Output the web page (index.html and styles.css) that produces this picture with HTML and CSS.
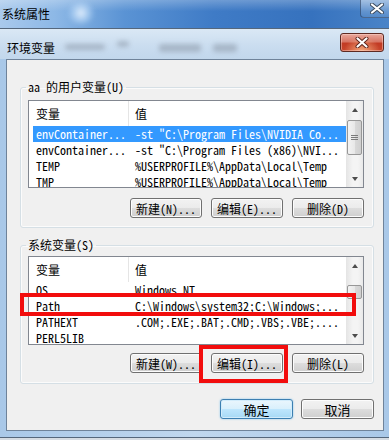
FILE: index.html
```html
<!DOCTYPE html>
<html lang="zh-CN">
<head>
  <meta charset="UTF-8" />
  <meta name="viewport" content="width=device-width, initial-scale=1.0" />
  <title>环境变量</title>
  <link rel="stylesheet" href="styles.css">
</head>
<body>
  <div class="screen">
    <div class="outer-bar">
      <span class="outer-title">系统属性</span>
      <span class="outer-glow"></span>
      <span class="outer-close">
        <svg width="14" height="11" viewBox="0 0 14 11"><path d="M2 1.5 L12 9.5 M12 1.5 L2 9.5" stroke="#3a4a5e" stroke-width="4" stroke-linecap="round"/><path d="M2 1.5 L12 9.5 M12 1.5 L2 9.5" stroke="#fff" stroke-width="2.2" stroke-linecap="round"/></svg>
      </span>
    </div>

    <div class="dialog">
      <div class="dialog-bar">
        <span class="dialog-title">环境变量</span>
        <span class="smudge s1"></span>
        <span class="smudge s2"></span>
        <span class="smudge s3"></span>
        <span class="smudge s4"></span>
        <span class="close-btn">
          <svg width="14" height="11" viewBox="0 0 14 11"><path d="M2.5 1.5 L11.5 9.5 M11.5 1.5 L2.5 9.5" stroke="#5b231a" stroke-width="4" stroke-linecap="round"/><path d="M2.5 1.5 L11.5 9.5 M11.5 1.5 L2.5 9.5" stroke="#fff" stroke-width="2.2" stroke-linecap="round"/></svg>
        </span>
      </div>

      <div class="client">
        <fieldset class="group group-user">
          <legend>aa 的用户变量(U)</legend>
          <div class="list list-user">
            <div class="list-body">
              <div class="list-head"><span class="head-name">变量</span><span class="head-value">值</span></div>
              <div class="row selected"><span class="col-name">envContainer...</span><span class="col-value">-st "C:\Program Files\NVIDIA Co...</span></div>
              <div class="row"><span class="col-name">envContainer...</span><span class="col-value">-st "C:\Program Files (x86)\NVI...</span></div>
              <div class="row"><span class="col-name">TEMP</span><span class="col-value">%USERPROFILE%\AppData\Local\Temp</span></div>
              <div class="row"><span class="col-name">TMP</span><span class="col-value">%USERPROFILE%\AppData\Local\Temp</span></div>
            </div>
            <div class="scrollbar">
              <div class="sb-btn sb-up"></div>
              <div class="sb-track"><div class="sb-thumb"></div></div>
              <div class="sb-btn sb-down"></div>
            </div>
          </div>
          <div class="btn-row">
            <span class="btn">新建(N)...</span>
            <span class="btn">编辑(E)...</span>
            <span class="btn">删除(D)</span>
          </div>
        </fieldset>

        <fieldset class="group group-system">
          <legend>系统变量(S)</legend>
          <div class="list list-system">
            <div class="list-body">
              <div class="list-head"><span class="head-name">变量</span><span class="head-value">值</span></div>
              <div class="row"><span class="col-name">OS</span><span class="col-value">Windows_NT</span></div>
              <div class="row"><span class="col-name">Path</span><span class="col-value">C:\Windows\system32;C:\Windows;...</span></div>
              <div class="row"><span class="col-name">PATHEXT</span><span class="col-value">.COM;.EXE;.BAT;.CMD;.VBS;.VBE;....</span></div>
              <div class="row"><span class="col-name">PERL5LIB</span><span class="col-value"></span></div>
            </div>
            <div class="scrollbar">
              <div class="sb-btn sb-up"></div>
              <div class="sb-track"><div class="sb-thumb"></div></div>
              <div class="sb-btn sb-down"></div>
            </div>
          </div>
          <div class="btn-row">
            <span class="btn">新建(W)...</span>
            <span class="btn">编辑(I)...</span>
            <span class="btn">删除(L)</span>
          </div>
        </fieldset>

        <div class="btn-row footer">
          <span class="btn btn-default">确定</span>
          <span class="btn">取消</span>
        </div>
      </div>
    </div>

    <div class="mark mark-path"></div>
    <div class="mark mark-edit"></div>
  </div>
</body>
</html>
```

FILE: styles.css
```css
* {
  box-sizing: border-box;
}
body {
  margin: 0;
  background: #d6dce3;
  font-family: "Noto Sans Mono CJK SC", "Noto Sans CJK SC", "Liberation Mono", monospace;
  font-size: 12px;
  color: #000;
}
.screen {
  position: relative;
  width: 389px;
  height: 440px;
  overflow: hidden;
  background: #d6dce3;
}

/* outer window title bar */
.outer-bar {
  height: 28px;
  display: flex;
  align-items: flex-start;
  background:
    linear-gradient(to bottom, rgba(255,255,255,0.25), rgba(255,255,255,0) 40%),
    linear-gradient(to right, #a9c9ec 0%, #8db8e6 14%, #5a93d4 32%, #3f7bc6 55%, #3672be 80%, #4a84c8 100%);
}
.outer-title {
  font-family: "Noto Sans CJK SC", sans-serif;
  font-size: 12px;
  line-height: 16px;
  margin: 6px 0 0 2px;
  color: #000;
}
.outer-glow {
  width: 30px;
  height: 22px;
  margin: 2px 0 0 16px;
  border-radius: 50%;
  background: radial-gradient(circle, rgba(235,245,255,0.9) 0%, rgba(190,220,250,0.5) 45%, rgba(120,170,230,0) 75%);
  filter: blur(2px);
}
.outer-close {
  margin-left: auto;
  margin-right: -4px;
  width: 33px;
  height: 18px;
  display: flex;
  align-items: center;
  justify-content: center;
  border: 1px solid rgba(30,50,80,0.55);
  border-top: 0;
  border-radius: 0 0 0 4px;
  background: linear-gradient(to bottom, rgba(255,255,255,0.35), rgba(255,255,255,0.08));
}

/* inner dialog */
.dialog {
  border-top: 1px solid #55677c;
  border-bottom: 1px solid #55677c;
  padding: 0 5px 6px 6px;
  background: linear-gradient(to right, #a9c8e8, #c0d7ee 50%, #a9c8e8);
}
.dialog-bar {
  height: 30px;
  display: flex;
  align-items: flex-start;
  margin: 0 -5px 0 -6px;
  padding-left: 7px;
  background: linear-gradient(to bottom, #dae8f5, #c9dcef 60%, #c2d7ec);
}
.dialog-title {
  font-family: "Noto Sans CJK SC", sans-serif;
  font-size: 12px;
  line-height: 16px;
  margin-top: 11px;
}
.smudge {
  height: 8px;
  margin-top: 13px;
  background: #98a6b6;
  border-radius: 3px;
  filter: blur(2.5px);
  opacity: 0.7;
}
.s1 { width: 40px; margin-left: 10px; height: 6px; margin-top: 15px; }
.s2 { width: 12px; margin-left: 12px; height: 6px; margin-top: 12px; }
.s3 { width: 42px; margin-left: 30px; margin-top: 15px; }
.s4 { width: 24px; margin-left: 12px; margin-top: 15px; }
.close-btn {
  margin: 4px 5px 0 auto;
  width: 44px;
  height: 19px;
  display: flex;
  align-items: center;
  justify-content: center;
  border: 1px solid #5e2a22;
  border-radius: 3px;
  background:
    radial-gradient(ellipse at 50% 100%, rgba(255,190,140,0.8), rgba(255,160,120,0) 60%),
    linear-gradient(to bottom, #e9a99d 0%, #d77564 45%, #c23b24 55%, #c8462c 100%);
  box-shadow: inset 0 0 0 1px rgba(255,220,210,0.45);
}

.client {
  background: #f0f0f0;
  border: 1px solid #6f839a;
  padding: 0 9px 11px 13px;
}

/* group boxes */
.group {
  margin: 19px 0 0 0;
  padding: 5px 9px 9px 7px;
  border: 1px solid #d5dfe5;
  border-radius: 3px;
  box-shadow: inset 0 0 0 1px #fbfbfb;
  min-width: 0;
}
.group legend {
  padding: 0 2px;
  margin-left: -2px;
  line-height: 16px;
}
.group-system {
  margin-top: 9px;
  padding-top: 3px;
  padding-bottom: 10px;
}

/* list views */
.list {
  display: flex;
  background: #fff;
  border: 1px solid #828790;
  height: 88px;
  overflow: hidden;
}
.list-system {
  height: 89px;
}
.list-body {
  flex: 1;
  min-width: 0;
  overflow: hidden;
}
.list-head {
  display: flex;
  height: 25px;
  align-items: center;
}
.head-name {
  width: 100px;
  padding-left: 7px;
  border-right: 1px solid #e5e5e5;
  height: 25px;
  line-height: 25px;
}
.head-value {
  padding-left: 6px;
}
.row {
  display: flex;
  height: 16px;
  line-height: 16px;
  margin-left: 4px;
  white-space: nowrap;
}
.row.selected {
  background: #3399ff;
  color: #fff;
}
.col-name {
  width: 96px;
  padding-left: 3px;
  flex: none;
}
.col-value {
  padding-left: 6px;
}

/* scrollbars */
.scrollbar {
  width: 17px;
  flex: none;
  display: flex;
  flex-direction: column;
  background: linear-gradient(to right, #e4e4e4, #f4f4f4 40%, #f4f4f4 70%, #e9e9e9);
}
.sb-btn {
  height: 17px;
  flex: none;
  display: flex;
  align-items: center;
  justify-content: center;
}
.sb-up::before,
.sb-down::before {
  content: "";
  border-left: 3.5px solid transparent;
  border-right: 3.5px solid transparent;
}
.sb-up::before {
  border-bottom: 4px solid #4d4d4d;
}
.sb-down::before {
  border-top: 4px solid #4d4d4d;
}
.sb-track {
  flex: 1;
}
.sb-thumb {
  margin: 2px 0 0 1px;
  width: 15px;
  height: 35px;
  border: 1px solid #979797;
  border-radius: 2px;
  background: linear-gradient(to right, #f3f3f3, #e8e8e8 50%, #d9d9d9 51%, #cfcfcf);
  display: flex;
  align-items: center;
  justify-content: center;
}
.sb-thumb::after {
  content: "";
  width: 7px;
  height: 5px;
  background: repeating-linear-gradient(to bottom, #7a7a7a 0, #7a7a7a 1px, transparent 1px, transparent 2px);
}
.list-system .sb-thumb {
  margin-top: 11px;
  height: 14px;
}
.list-system .sb-thumb::after {
  display: none;
}

/* buttons */
.btn-row {
  display: flex;
  justify-content: flex-end;
  gap: 9px;
  margin-top: 10px;
}
.group-system .btn-row {
  margin-top: 8px;
}
.btn {
  width: 72px;
  height: 20px;
  display: flex;
  align-items: center;
  justify-content: center;
  border: 1px solid #707070;
  border-radius: 3px;
  background: linear-gradient(to bottom, #f2f2f2 0%, #ebebeb 50%, #dddddd 51%, #cfcfcf 100%);
  box-shadow: inset 0 0 0 1px #fcfcfc;
  white-space: nowrap;
}
.footer {
  margin-top: 15px;
  gap: 8px;
}
.footer .btn {
  width: 73px;
  font-family: "Noto Sans CJK SC", sans-serif;
  font-size: 13px;
}
.btn-default {
  border-color: #3c7fb1;
  background: linear-gradient(to bottom, #eaf6fd 0%, #d9f0fc 50%, #bee6fd 51%, #a7d9f5 100%);
  box-shadow: inset 0 0 0 1px #d2ecfb, 0 0 2px #7fc0ec;
}

/* red highlight marks drawn over the dialog */
.mark {
  position: absolute;
  border: 4px solid #f20d0d;
}
.mark-path {
  left: 20px;
  top: 293px;
  width: 336px;
  height: 23px;
}
.mark-edit {
  left: 199px;
  top: 345px;
  width: 89px;
  height: 38px;
}
```
